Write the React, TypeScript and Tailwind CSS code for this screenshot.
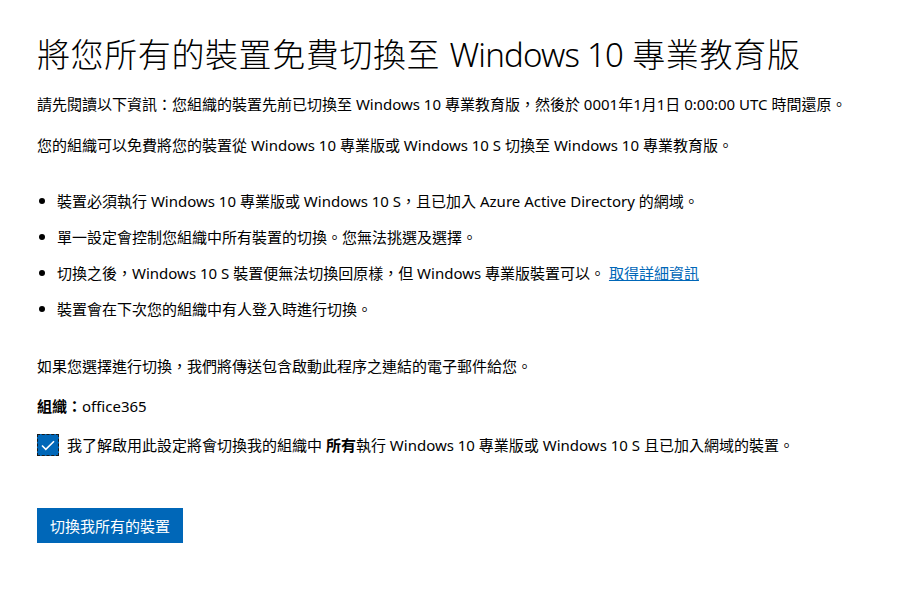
import React from "react";

const font = '"Segoe UI", "Noto Sans", "Noto Sans CJK TC", sans-serif';

export default function App() {
  const bullets: React.ReactNode[] = [
    "裝置必須執行 Windows 10 專業版或 Windows 10 S，且已加入 Azure Active Directory 的網域。",
    "單一設定會控制您組織中所有裝置的切換。您無法挑選及選擇。",
    <>
      切換之後，Windows 10 S 裝置便無法切換回原樣，但 Windows 專業版裝置可以。{" "}
      <a href="#" className="text-[#0067b8] underline">取得詳細資訊</a>
    </>,
    "裝置會在下次您的組織中有人登入時進行切換。",
  ];
  return (
    <div className="w-[906px] h-[614px] bg-white text-black overflow-hidden" style={{ fontFamily: font }}>
      <div className="flex flex-col pl-[37px] pt-[35px]">
        <h1 className="text-[33px] leading-[40px] font-light tracking-[0.6px]">
          將您所有的裝置免費切換至 <span className="tracking-[-0.8px]">Windows 10</span> 專業教育版
        </h1>
        <p className="mt-[19px] text-[15px] leading-[20px]">請先閱讀以下資訊：您組織的裝置先前已切換至 Windows 10 專業教育版，然後於 0001年1月1日 0:00:00 UTC 時間還原。</p>
        <p className="mt-[21px] text-[15px] leading-[20px]">您的組織可以免費將您的裝置從 Windows 10 專業版或 Windows 10 S 切換至 Windows 10 專業教育版。</p>
        <ul className="mt-[36px] flex flex-col gap-[16px]">
          {bullets.map((b, i) => (
            <li key={i} className="flex items-center text-[15px] leading-[20px]">
              <span className="w-[6px] h-[6px] rounded-full bg-black ml-[2px] mr-[12px] shrink-0" />
              <span>{b}</span>
            </li>
          ))}
        </ul>
        <p className="mt-[37px] text-[15px] leading-[20px]">如果您選擇進行切換，我們將傳送包含啟動此程序之連結的電子郵件給您。</p>
        <p className="mt-[20px] text-[15px] leading-[20px]"><span className="font-semibold">組織：</span>office365</p>
        <div className="mt-[18px] flex items-center">
          <div className="w-[22px] h-[22px] border border-dashed border-[#1a1a1a] bg-[#0067b8] flex items-center justify-center shrink-0">
            <svg width="14" height="11" viewBox="0 0 14 11" fill="none">
              <path d="M1 5.5 L4.8 9.3 L13 1.2" stroke="white" strokeWidth="1.6" />
            </svg>
          </div>
          <span className="ml-[8px] text-[15px] leading-[20px]">我了解啟用此設定將會切換我的組織中 <span className="font-semibold">所有</span>執行 Windows 10 專業版或 Windows 10 S 且已加入網域的裝置。</span>
        </div>
        <div className="mt-[52px]">
          <button className="h-[35px] px-[13px] bg-[#0067b8] text-white text-[15px] leading-[20px]">切換我所有的裝置</button>
        </div>
      </div>
    </div>
  );
}
